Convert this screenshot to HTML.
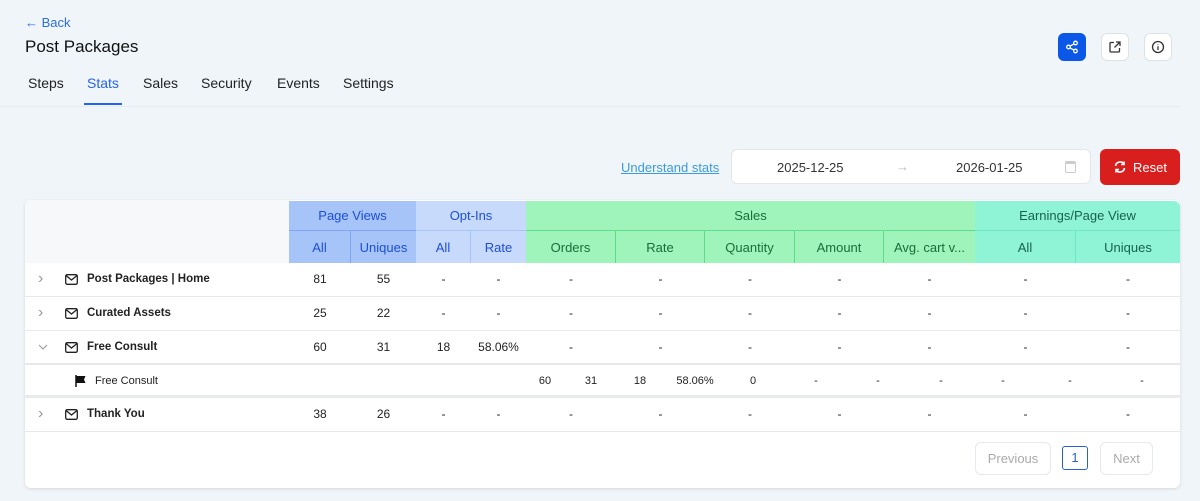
<!DOCTYPE html>
<html><head><meta charset="utf-8"><style>
*{box-sizing:border-box;margin:0;padding:0}
body{width:1200px;height:501px;background:#f0f5f9;font-family:"Liberation Sans",sans-serif;position:relative;overflow:hidden;color:#111}
.a{position:absolute}
.c{position:absolute;text-align:center;white-space:nowrap}
.tab{position:absolute;top:75px;font-size:14px;color:#222}
.btn{position:absolute;top:33px;width:28px;height:28px;border-radius:6px;background:#fff;border:1px solid #dde2e8;display:flex;align-items:center;justify-content:center}
.card{position:absolute;left:25px;top:200px;width:1155px;height:288px;background:#fff;border-radius:6px;box-shadow:0 1px 3px rgba(0,0,0,.12)}
.h{position:absolute;font-size:13px;display:flex;align-items:center;justify-content:center}
.row{position:absolute;left:25px;width:1155px;border-bottom:1px solid #e6e8eb;font-size:12px;color:#222}
.row .c{top:0;line-height:33px}
.nm{position:absolute;left:62px;font-weight:bold;font-size:11.5px;line-height:33px}
.chev{position:absolute;left:13px;top:0;line-height:32px;color:#999;font-size:16px}
</style></head><body>
<div class="a" style="left:25px;top:15px;font-size:13px;color:#2b6fe0">← Back</div>
<div class="a" style="left:25px;top:37px;font-size:17px;color:#111">Post Packages</div>
<div class="tab" style="left:28px">Steps</div>
<div class="tab" style="left:87px;color:#2563eb">Stats</div>
<div class="a" style="left:84px;top:103px;width:38px;height:2px;background:#2563eb"></div>
<div class="tab" style="left:143px">Sales</div>
<div class="tab" style="left:201px">Security</div>
<div class="tab" style="left:277px">Events</div>
<div class="tab" style="left:343px">Settings</div>
<div class="a" style="left:0;top:106px;width:1180px;height:1px;background:#e8ecf0"></div>
<div class="btn" style="left:1058px;background:#0b57e8;border-color:#0b57e8"><svg width="14" height="14" viewBox="0 0 14 14" fill="none" stroke="#fff" stroke-width="1.3"><circle cx="10.5" cy="3" r="1.8"/><circle cx="3.5" cy="7" r="1.8"/><circle cx="10.5" cy="11" r="1.8"/><path d="M5 6.1 9 3.9M5 7.9 9 10.1"/></svg></div>
<div class="btn" style="left:1101px"><svg width="14" height="14" viewBox="0 0 14 14" fill="none" stroke="#333" stroke-width="1.3"><path d="M6 2.5H3a1 1 0 0 0-1 1V11a1 1 0 0 0 1 1h7.5a1 1 0 0 0 1-1V8M8 2h4v4M12 2 6.5 7.5"/></svg></div>
<div class="btn" style="left:1144px"><svg width="14" height="14" viewBox="0 0 14 14" fill="none" stroke="#333" stroke-width="1.3"><circle cx="7" cy="7" r="5.5"/><path d="M7 6.3V10M7 4v.6"/></svg></div>
<div class="a" style="left:621px;top:160px;font-size:13px;color:#3b9be0;text-decoration:underline">Understand stats</div>
<div class="a" style="left:731px;top:149px;width:360px;height:35px;background:#fff;border:1px solid #e2e6ea;border-radius:6px;font-size:13px;color:#333">
<span class="a" style="left:45px;top:10px">2025-12-25</span><span class="a" style="left:164px;top:9px;color:#bbb">→</span><span class="a" style="left:224px;top:10px">2026-01-25</span>
<span class="a" style="left:333px;top:11px;width:11px;height:12px;border:1px solid #ccc;border-top-width:3px;border-radius:2px"></span></div>
<div class="a" style="left:1100px;top:149px;width:80px;height:36px;background:#d91e1e;border-radius:6px;color:#fff;font-size:13px;display:flex;align-items:center;justify-content:center;gap:6px"><svg width="14" height="14" viewBox="0 0 14 14" fill="none" stroke="#fff" stroke-width="1.6"><path d="M2.5 6A4.6 4.6 0 0 1 11 4.2M11.5 8A4.6 4.6 0 0 1 3 9.8M11 1.5v3H8M3 12.5v-3h3"/></svg>Reset</div>
<div class="card"></div>
<div class="a" style="left:25px;top:200px;width:264px;height:63px;background:#f6f8fa;border-radius:6px 0 0 0"></div>
<div class="h" style="left:289px;top:201px;width:127px;height:30px;background:#a6c4f8;color:#1d4ed8;border-bottom:1px solid #7ea6f0">Page Views</div>
<div class="h" style="left:289px;top:231px;width:62px;height:32px;background:#a6c4f8;color:#1d4ed8;border-right:1px solid #7ea6f0">All</div>
<div class="h" style="left:351px;top:231px;width:65px;height:32px;background:#a6c4f8;color:#1d4ed8">Uniques</div>
<div class="h" style="left:416px;top:201px;width:110px;height:30px;background:#c7dafb;color:#1d4ed8;border-bottom:1px solid #a6c4f8">Opt-Ins</div>
<div class="h" style="left:416px;top:231px;width:55px;height:32px;background:#c7dafb;color:#1d4ed8;border-right:1px solid #a6c4f8">All</div>
<div class="h" style="left:471px;top:231px;width:55px;height:32px;background:#c7dafb;color:#1d4ed8">Rate</div>
<div class="h" style="left:526px;top:201px;width:449px;height:30px;background:#9ef4bb;color:#1e6b3a;border-bottom:1px solid #5fdc8a">Sales</div>
<div class="h" style="left:526px;top:231px;width:90px;height:32px;background:#9ef4bb;color:#1e6b3a;border-right:1px solid #5fdc8a">Orders</div>
<div class="h" style="left:616px;top:231px;width:89px;height:32px;background:#9ef4bb;color:#1e6b3a;border-right:1px solid #5fdc8a">Rate</div>
<div class="h" style="left:705px;top:231px;width:90px;height:32px;background:#9ef4bb;color:#1e6b3a;border-right:1px solid #5fdc8a">Quantity</div>
<div class="h" style="left:795px;top:231px;width:89px;height:32px;background:#9ef4bb;color:#1e6b3a;border-right:1px solid #5fdc8a">Amount</div>
<div class="h" style="left:884px;top:231px;width:91px;height:32px;background:#9ef4bb;color:#1e6b3a">Avg. cart v...</div>
<div class="h" style="left:975px;top:201px;width:205px;height:30px;background:#8ff3d6;color:#17634c;border-bottom:1px solid #6ee7c6;border-radius:0 6px 0 0">Earnings/Page View</div>
<div class="h" style="left:975px;top:231px;width:101px;height:32px;background:#8ff3d6;color:#17634c;border-right:1px solid #6ee7c6">All</div>
<div class="h" style="left:1076px;top:231px;width:104px;height:32px;background:#8ff3d6;color:#17634c">Uniques</div>

<div class="row" style="top:263px;height:34px">
<span class="chev">&#x203A;</span>
<svg class="a" style="left:40px;top:11px" width="13" height="11" viewBox="0 0 13 11" fill="none" stroke="#222" stroke-width="1.3"><rect x=".7" y=".7" width="11.6" height="9.6" rx="1.5"/><path d="M1 1.5 6.5 6 12 1.5"/></svg>
<span class="nm">Post Packages | Home</span>
<span class="c" style="left:264px;width:62px">81</span><span class="c" style="left:326px;width:65px">55</span><span class="c" style="left:391px;width:55px">-</span><span class="c" style="left:446px;width:55px">-</span><span class="c" style="left:501px;width:90px">-</span><span class="c" style="left:591px;width:89px">-</span><span class="c" style="left:680px;width:90px">-</span><span class="c" style="left:770px;width:89px">-</span><span class="c" style="left:859px;width:91px">-</span><span class="c" style="left:950px;width:101px">-</span><span class="c" style="left:1051px;width:104px">-</span></div>
<div class="row" style="top:297px;height:34px">
<span class="chev">&#x203A;</span>
<svg class="a" style="left:40px;top:11px" width="13" height="11" viewBox="0 0 13 11" fill="none" stroke="#222" stroke-width="1.3"><rect x=".7" y=".7" width="11.6" height="9.6" rx="1.5"/><path d="M1 1.5 6.5 6 12 1.5"/></svg>
<span class="nm">Curated Assets</span>
<span class="c" style="left:264px;width:62px">25</span><span class="c" style="left:326px;width:65px">22</span><span class="c" style="left:391px;width:55px">-</span><span class="c" style="left:446px;width:55px">-</span><span class="c" style="left:501px;width:90px">-</span><span class="c" style="left:591px;width:89px">-</span><span class="c" style="left:680px;width:90px">-</span><span class="c" style="left:770px;width:89px">-</span><span class="c" style="left:859px;width:91px">-</span><span class="c" style="left:950px;width:101px">-</span><span class="c" style="left:1051px;width:104px">-</span></div>
<div class="row" style="top:331px;height:33px">
<svg class="a" style="left:13px;top:13px" width="10" height="6" viewBox="0 0 10 6" fill="none" stroke="#999" stroke-width="1.1"><path d="M1 1l4 4 4-4"/></svg>
<svg class="a" style="left:40px;top:11px" width="13" height="11" viewBox="0 0 13 11" fill="none" stroke="#222" stroke-width="1.3"><rect x=".7" y=".7" width="11.6" height="9.6" rx="1.5"/><path d="M1 1.5 6.5 6 12 1.5"/></svg>
<span class="nm">Free Consult</span>
<span class="c" style="left:264px;width:62px">60</span><span class="c" style="left:326px;width:65px">31</span><span class="c" style="left:391px;width:55px">18</span><span class="c" style="left:446px;width:55px">58.06%</span><span class="c" style="left:501px;width:90px">-</span><span class="c" style="left:591px;width:89px">-</span><span class="c" style="left:680px;width:90px">-</span><span class="c" style="left:770px;width:89px">-</span><span class="c" style="left:859px;width:91px">-</span><span class="c" style="left:950px;width:101px">-</span><span class="c" style="left:1051px;width:104px">-</span></div>
<div class="row" style="top:364px;height:34px;border-bottom:3px solid #e8eaed;border-top:1px solid #e6e8eb;font-size:11px">
<svg class="a" style="left:50px;top:10px" width="11" height="12" viewBox="0 0 11 12"><path d="M1 0v12" stroke="#111" stroke-width="1.5"/><path d="M1.5 1h9l-1.5 3.5 1.5 3.5h-9z" fill="#111"/></svg>
<span class="a" style="left:70px;line-height:32px">Free Consult</span>
<span class="c" style="left:510px;width:20px;line-height:32px">60</span><span class="c" style="left:556px;width:20px;line-height:32px">31</span><span class="c" style="left:605px;width:20px;line-height:32px">18</span><span class="c" style="left:645px;width:50px;line-height:32px">58.06%</span><span class="c" style="left:718px;width:20px;line-height:32px">0</span>
<span class="c" style="left:781px;width:20px;line-height:32px">-</span><span class="c" style="left:843px;width:20px;line-height:32px">-</span><span class="c" style="left:906px;width:20px;line-height:32px">-</span><span class="c" style="left:968px;width:20px;line-height:32px">-</span><span class="c" style="left:1035px;width:20px;line-height:32px">-</span><span class="c" style="left:1107px;width:20px;line-height:32px">-</span></div>
<div class="row" style="top:398px;height:34px">
<span class="chev">&#x203A;</span>
<svg class="a" style="left:40px;top:11px" width="13" height="11" viewBox="0 0 13 11" fill="none" stroke="#222" stroke-width="1.3"><rect x=".7" y=".7" width="11.6" height="9.6" rx="1.5"/><path d="M1 1.5 6.5 6 12 1.5"/></svg>
<span class="nm">Thank You</span>
<span class="c" style="left:264px;width:62px">38</span><span class="c" style="left:326px;width:65px">26</span><span class="c" style="left:391px;width:55px">-</span><span class="c" style="left:446px;width:55px">-</span><span class="c" style="left:501px;width:90px">-</span><span class="c" style="left:591px;width:89px">-</span><span class="c" style="left:680px;width:90px">-</span><span class="c" style="left:770px;width:89px">-</span><span class="c" style="left:859px;width:91px">-</span><span class="c" style="left:950px;width:101px">-</span><span class="c" style="left:1051px;width:104px">-</span></div>

<div class="a" style="left:975px;top:442px;width:76px;height:33px;border:1px solid #e6e8eb;border-radius:6px;font-size:13px;color:#aaa;text-align:center;line-height:31px">Previous</div>
<div class="a" style="left:1062px;top:446px;width:26px;height:24px;border:1px solid #2b5fcf;border-radius:3px;font-size:13px;color:#2b5fcf;text-align:center;line-height:22px">1</div>
<div class="a" style="left:1100px;top:442px;width:53px;height:33px;border:1px solid #e6e8eb;border-radius:6px;font-size:13px;color:#aaa;text-align:center;line-height:31px">Next</div>
</body></html>
